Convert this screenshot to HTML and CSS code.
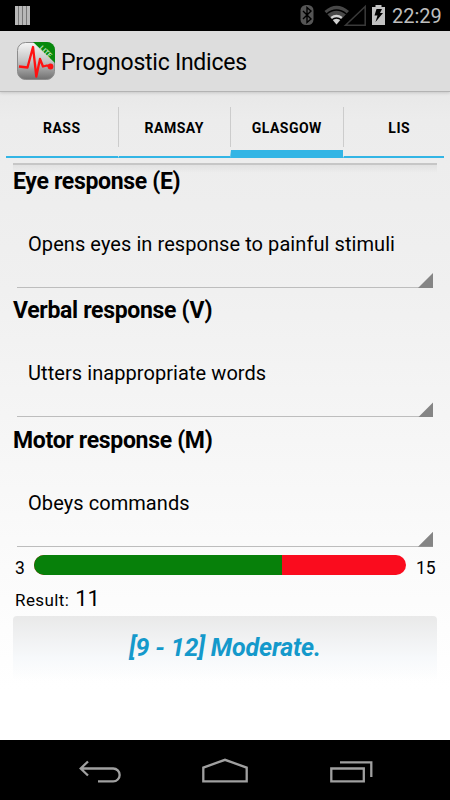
FILE: index.html
```html
<!DOCTYPE html>
<html lang="en">
<head>
    <meta charset="UTF-8">
    <meta name="viewport" content="width=device-width, initial-scale=1.0">
    <title>Prognostic Indices</title>
    <link rel="stylesheet" href="styles.css">
</head>
<body>
<div class="statusbar">
    <svg class="bars" width="15" height="20" viewBox="0 0 15 20">
        <path fill="#b8b8b8" d="M0 0h15v19H0z"/>
        <path stroke="#777" stroke-width="1" d="M3.5 0v19M7.5 0v19M11.5 0v19"/>
    </svg>
    <svg class="indicators" width="86" height="22" viewBox="300 4 86 22">
        <rect x="300.5" y="5" width="13" height="20" rx="5.5" fill="#555"/>
        <path fill="none" stroke="#000" stroke-width="1.4" d="M303 11l8 8-4 3.500V7.500l4 3.500-8 8"/>
        <path fill="#484848" d="M336.500 24.500L324.500 11q12-10.500 24.500 0z"/>
        <path fill="none" stroke="#000" stroke-width="1.300" d="M326.500 14q10-8 20 0"/>
        <path fill="#d2d2d2" d="M336.500 24.500L330.500 17q6-4.500 12 0z"/>
        <path fill="none" stroke="#000" stroke-width="1.300" d="M331.500 20q5-4 10 0"/>
        <path fill="none" stroke="#3a3a3a" stroke-width="1.500" d="M345.500 25.200L365.200 6.500v18.700z"/>
        <path fill="#c2c2c2" d="M375.500 5h6v2h3.500v18h-13V7h3.500z"/>
        <path fill="#000" d="M376.500 9h5.500l-2 4h3l-7.500 9 2-6.500h-3z"/>
    </svg>
    <span class="clock">22:29</span>
</div>

<div class="actionbar">
    <svg class="logo" width="40" height="40" viewBox="0 0 40 40">
        <defs>
            <linearGradient id="metal" x1="0" y1="0" x2="0" y2="1">
                <stop offset="0" stop-color="#f6f6f6"/>
                <stop offset="0.5" stop-color="#c4c4c4"/>
                <stop offset="1" stop-color="#707070"/>
            </linearGradient>
            <clipPath id="shape"><rect x="1" y="1" width="38" height="38" rx="8"/></clipPath>
        </defs>
        <rect x="1.500" y="1.500" width="37" height="37" rx="8" fill="url(#metal)" stroke="#8c8c8c"/>
        <g clip-path="url(#shape)">
            <path fill="#07890d" d="M17 1h22v21z"/>
            <text class="ribbon" x="0" y="0" transform="translate(23 7.500) rotate(44)">LITE</text>
        </g>
        <path fill="none" stroke="#f11" stroke-width="2.300" stroke-linejoin="round" d="M3 25.500l8.500 1L17 6l3.300 29.500L24 18l3 7.500 4-1 3 1"/>
        <circle cx="34.500" cy="25.500" r="2.900" fill="#f11"/>
    </svg>
    <h1>Prognostic Indices</h1>
</div>

<div class="tabs">
    <div class="tab">RASS</div>
    <div class="tab">RAMSAY</div>
    <div class="tab selected">GLASGOW</div>
    <div class="tab">LIS</div>
</div>

<div class="content">
    <div class="group">
        <h2>Eye response (E)</h2>
        <div class="spinner"><span>Opens eyes in response to painful stimuli</span></div>
    </div>
    <div class="group">
        <h2>Verbal response (V)</h2>
        <div class="spinner"><span>Utters inappropriate words</span></div>
    </div>
    <div class="group">
        <h2>Motor response (M)</h2>
        <div class="spinner"><span>Obeys commands</span></div>
    </div>
    <div class="scale">
        <span class="min">3</span>
        <div class="bar"><div class="fill" style="width: 66.67%"></div></div>
        <span class="max">15</span>
    </div>
    <div class="result"><span>Result:</span><span class="score">11</span></div>
    <div class="verdict">[9 - 12] Moderate.</div>
</div>

<div class="navbar">
    <svg width="340" height="30" viewBox="60 757 340 30" fill="none" stroke="#a0a0a0" stroke-width="2.300">
        <path d="M88 761.500l-7.300 7 7.300 7M80.700 768.500h32.500a6.400 6.400 0 0 1 0 12.900H98"/>
        <path d="M203.300 781.400v-13.800l21.700-7.800 21.700 7.800v13.800z"/>
        <path d="M331.300 768.500h32.500v12.900h-32.500zM340 762.300h31.300V777"/>
    </svg>
</div>
</body>
</html>
```

FILE: styles.css
```css
body {
    margin: 0;
    height: 800px;
    display: flex;
    flex-direction: column;
    overflow: hidden;
    font-family: Roboto, "Liberation Sans", sans-serif;
    color: #000;
    background: linear-gradient(#e8e8e8 92px, #ececec 120px, #f0f0f0 290px, #fafafa 540px, #fff 690px);
}
h1, h2 {
    margin: 0;
}

/* status bar */
.statusbar {
    height: 31px;
    flex: none;
    display: flex;
    background: #000;
}
.bars {
    margin: 6px 0 0 15px;
}
.indicators {
    margin: 4px 0 0 270px;
}
.clock {
    margin-left: 6px;
    font-size: 20px;
    line-height: 33px;
    color: #bebebe;
}

/* action bar */
.actionbar {
    height: 61px;
    flex: none;
    box-sizing: border-box;
    display: flex;
    align-items: center;
    padding-left: 16px;
    background: #ddd;
    border-bottom: 1px solid #b3b3b3;
    box-shadow: 0 1px 3px rgba(0, 0, 0, .15);
}
.ribbon {
    font-size: 7px;
    font-weight: bold;
    fill: #b8dfb8;
}
.actionbar h1 {
    margin: 3px 0 0 5px;
    font-size: 23px;
    font-weight: normal;
    letter-spacing: -.25px;
    white-space: nowrap;
}

/* tabs */
.tabs {
    display: flex;
    flex: none;
    height: 66px;
    margin: 0 6px;
    overflow: hidden;
}
.tab {
    width: 111.5px;
    height: 66px;
    flex: none;
    box-sizing: border-box;
    padding-top: 1px;
    margin-right: 1px;
    border-bottom: 2px solid #33b5e5;
    font-size: 14px;
    font-weight: bold;
    line-height: 70px;
    letter-spacing: .5px;
    text-align: center;
}
/* divider sits in the gap before the tab */
.tab + .tab {
    background: linear-gradient(#ccc, #ccc) left 15px / 1px 40px no-repeat;
    border-left: 1px solid transparent;
    background-origin: border-box;
    margin-left: -1px;
    width: 112.5px;
    background-clip: border-box;
}
.tab.selected {
    border-bottom-width: 8px;
}

/* form */
.content {
    flex: 1;
    padding: 1px 13px 0;
}
.content::before {
    content: "";
    display: block;
    height: 8px;
    margin: 4px 0 -13px;
    border-top: 2px solid #c6c6c6;
    background: linear-gradient(#e2e2e2, rgba(238, 238, 238, 0));
}
.group {
    height: 129.4px;
}
.group h2 {
    padding-top: 7px;
    font-size: 23px;
    line-height: 29px;
    letter-spacing: -.32px;
    white-space: nowrap;
}
.spinner {
    height: 92px;
    box-sizing: border-box;
    margin: 0 4px 0 4px;
    padding-left: 11px;
    border-bottom: 1px solid #bdbdbd;
    font-size: 20px;
    line-height: 96px;
    letter-spacing: .07px;
    white-space: nowrap;
    display: flex;
    justify-content: space-between;
}
.spinner::after {
    content: "";
    align-self: flex-end;
    width: 15px;
    height: 15px;
    margin-bottom: -1px;
    background: #858585;
    clip-path: polygon(100% 0, 100% 100%, 0 100%);
}
.scale {
    display: flex;
    height: 20px;
    margin-top: 6.4px;
    font-size: 17.5px;
    line-height: 26px;
}
.min {
    width: 19px;
    margin-left: 2px;
}
.bar {
    width: 372px;
    height: 20px;
    border-radius: 10px;
    overflow: hidden;
    background: #fa0c1e;
}
.fill {
    height: 20px;
    background: #07800a;
}
.max {
    margin-left: 10px;
}
.result {
    display: flex;
    align-items: baseline;
    height: 33.6px;
    margin-top: 8px;
    padding-left: 2px;
    font-size: 17px;
    line-height: 32px;
    letter-spacing: .4px;
}
.score {
    margin-left: 6px;
    font-size: 22px;
    letter-spacing: 0;
}
.verdict {
    height: 65px;
    border-radius: 4px;
    background: linear-gradient(#e9e9e9, #f7f9fb 65%, rgba(255, 255, 255, 0));
    color: #1499cb;
    font-size: 25px;
    font-weight: bold;
    font-style: italic;
    line-height: 63px;
    letter-spacing: -.15px;
    text-align: center;
}

/* navigation bar */
.navbar {
    height: 60px;
    flex: none;
    box-sizing: border-box;
    padding: 17px 0 0 60px;
    background: #000;
}
```
